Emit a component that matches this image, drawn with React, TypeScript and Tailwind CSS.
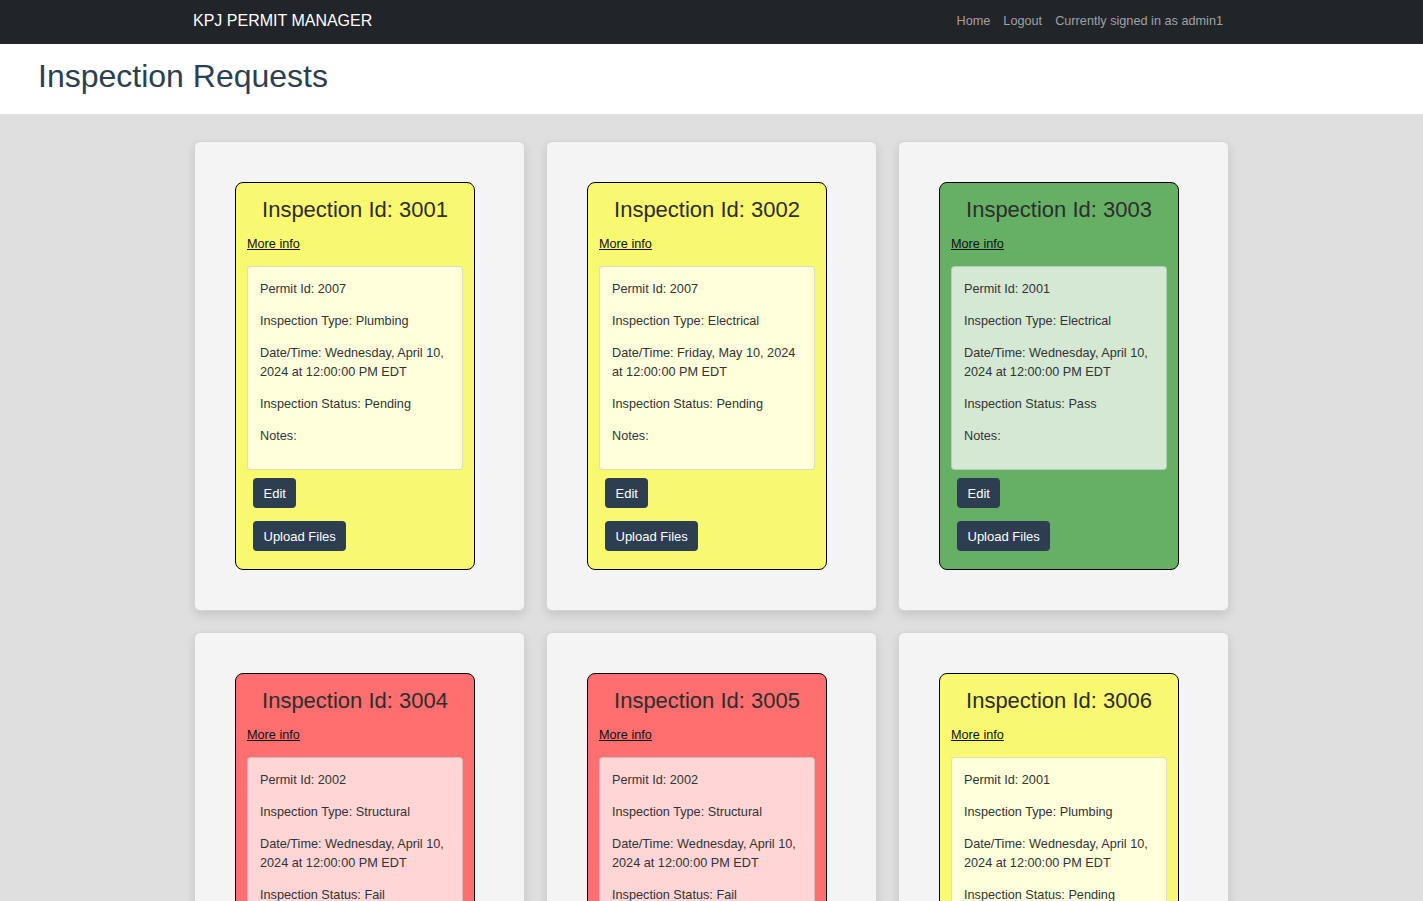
import React from "react";

type Item = {
  id: number;
  permit: number;
  type: string;
  date: string;
  status: "Pending" | "Pass" | "Fail";
};

const items: Item[] = [
  { id: 3001, permit: 2007, type: "Plumbing", date: "Wednesday, April 10, 2024 at 12:00:00 PM EDT", status: "Pending" },
  { id: 3002, permit: 2007, type: "Electrical", date: "Friday, May 10, 2024 at 12:00:00 PM EDT", status: "Pending" },
  { id: 3003, permit: 2001, type: "Electrical", date: "Wednesday, April 10, 2024 at 12:00:00 PM EDT", status: "Pass" },
  { id: 3004, permit: 2002, type: "Structural", date: "Wednesday, April 10, 2024 at 12:00:00 PM EDT", status: "Fail" },
  { id: 3005, permit: 2002, type: "Structural", date: "Wednesday, April 10, 2024 at 12:00:00 PM EDT", status: "Fail" },
  { id: 3006, permit: 2001, type: "Plumbing", date: "Wednesday, April 10, 2024 at 12:00:00 PM EDT", status: "Pending" },
];

function Card({ item }: { item: Item }) {
  const outer =
    item.status === "Pass"
      ? "bg-[#66b066]"
      : item.status === "Fail"
      ? "bg-[#ff6f6f]"
      : "bg-[#f9f871]";
  const inner =
    item.status === "Pass"
      ? "bg-[#d4e8d4]"
      : item.status === "Fail"
      ? "bg-[#ffd5d5]"
      : "bg-[#ffffdc]";
  return (
    <div className="w-[331px] h-[470px] bg-[#f4f4f4] border border-[#d4d4d4] rounded-[6px] p-[40px] shadow-[0_4px_10px_rgba(0,0,0,0.12)]">
      <div className={`w-[240px] border border-black rounded-[8px] ${outer} px-[11px] pt-[14px] pb-[18px]`}>
        <div className="text-center text-[22px] leading-[26px] text-[#2d2d2d] mb-[12px]">
          Inspection Id: {item.id}
        </div>
        <div className="text-[12.7px] leading-[19px] mb-[12px]">
          <a href="#" className="underline text-[#111]">More info</a>
        </div>
        <div className={`${inner} border border-[rgba(0,0,0,0.13)] rounded-[4px] px-[12px] pt-[13px] pb-[10px] text-[12.7px] leading-[19px] text-[#333]`}>
          <p className="mb-[13px]">Permit Id: {item.permit}</p>
          <p className="mb-[13px]">Inspection Type: {item.type}</p>
          <p className="mb-[13px]">Date/Time: {item.date}</p>
          <p className="mb-[13px]">Inspection Status: {item.status}</p>
          <p className="mb-[13px]">Notes:</p>
        </div>
        <div className="flex flex-col items-start ml-[6px] mt-[8px] gap-[13px]">
          <button className="h-[30px] pt-[2px] px-[10.5px] bg-[#2c3e50] text-white text-[13px] rounded-[4px]">Edit</button>
          <button className="h-[30px] pt-[2px] px-[10.5px] bg-[#2c3e50] text-white text-[13px] rounded-[4px]">Upload Files</button>
        </div>
      </div>
    </div>
  );
}

export default function App() {
  return (
    <div className="min-h-screen bg-[#e0dfe0] font-['Liberation_Sans',Arial,sans-serif]">
      <nav className="h-[44px] bg-[#212529] flex items-center justify-between pl-[193px] pr-[200px]">
        <div className="text-white text-[16px] -mt-[2px]">KPJ PERMIT MANAGER</div>
        <div className="flex items-center gap-[13px] text-[12.7px] text-[#a0a2a5]">
          <span>Home</span>
          <span>Logout</span>
          <span>Currently signed in as admin1</span>
        </div>
      </nav>
      <div className="h-[70px] bg-white flex items-center pl-[38px]">
        <h1 className="text-[32px] text-[#2c3e50] leading-none -mt-[6px]">Inspection Requests</h1>
      </div>
      <div className="w-[1035px] mx-auto pt-[27px] pb-[40px] grid grid-cols-[331px_331px_331px] gap-[21px]">
        {items.map((it) => (
          <Card key={it.id} item={it} />
        ))}
      </div>
    </div>
  );
}
